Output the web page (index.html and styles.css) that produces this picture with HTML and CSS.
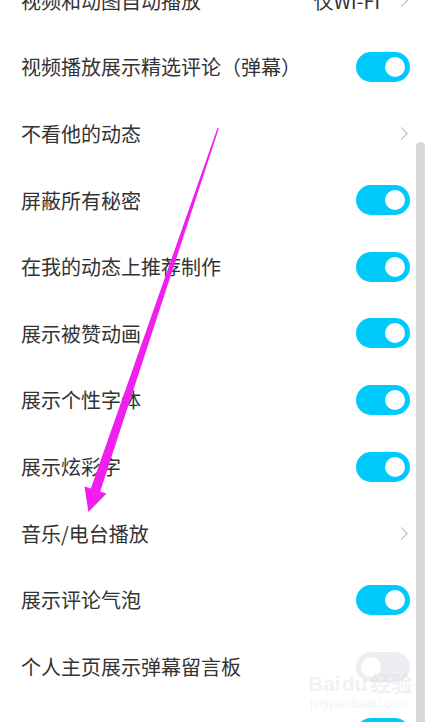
FILE: index.html
```html
<!DOCTYPE html>
<html lang="zh-CN">
<head>
  <meta charset="UTF-8" />
  <title>设置</title>
  <meta name="viewport" content="width=device-width, initial-scale=1.0" />
  <link rel="stylesheet" href="styles.css">
</head>
<body>
  <div class="screen">
    <ul class="list">
      <li class="row">
        <span class="label">视频和动图自动播放</span>
        <span class="value">仅Wi-Fi</span>
        <span class="chevron"></span>
      </li>
      <li class="row">
        <span class="label">视频播放展示精选评论（弹幕）</span>
        <span class="toggle on"></span>
      </li>
      <li class="row">
        <span class="label">不看他的动态</span>
        <span class="chevron"></span>
      </li>
      <li class="row">
        <span class="label">屏蔽所有秘密</span>
        <span class="toggle on"></span>
      </li>
      <li class="row">
        <span class="label">在我的动态上推荐制作</span>
        <span class="toggle on"></span>
      </li>
      <li class="row">
        <span class="label">展示被赞动画</span>
        <span class="toggle on"></span>
      </li>
      <li class="row">
        <span class="label">展示个性字体</span>
        <span class="toggle on"></span>
      </li>
      <li class="row">
        <span class="label">展示炫彩字</span>
        <span class="toggle on"></span>
      </li>
      <li class="row">
        <span class="label">音乐/电台播放</span>
        <span class="chevron"></span>
      </li>
      <li class="row">
        <span class="label">展示评论气泡</span>
        <span class="toggle on"></span>
      </li>
      <li class="row">
        <span class="label">个人主页展示弹幕留言板</span>
        <span class="toggle"></span>
      </li>
      <li class="row">
        <span class="label"></span>
        <span class="toggle on"></span>
      </li>
    </ul>
    <div class="track">
      <div class="thumb"></div>
    </div>

    <!-- annotation arrow drawn over the screenshot -->
    <svg class="arrow" width="428" height="722" viewBox="0 0 428 722">
      <polygon points="217.5,128 218.8,128.4 100.2,491.6 106.5,493.5 88.4,512 84.5,486.5 90.8,488.4" fill="#f01ff0" />
    </svg>

    <div class="watermark">
      <div class="wm-logo">Bai<span class="wm-du">du</span>经验</div>
      <div class="wm-url">jingyan.baidu.com</div>
    </div>
  </div>
</body>
</html>
```

FILE: styles.css
```css
body {
  margin: 0;
  background: #fff;
  font-family: "Noto Sans CJK SC", "Noto Sans", sans-serif;
  overflow: hidden;
}

.screen {
  position: relative;
  display: flex;
  width: 428px;
  height: 722px;
  overflow: hidden;
  background: #fff;
}

.list {
  flex: 1;
  list-style: none;
  margin: -33.3px 0 0;
  padding: 0;
}

.row {
  display: flex;
  align-items: center;
  height: 66.667px;
  padding: 0 6px 0 21px;
  box-sizing: border-box;
}

.label {
  flex: 1;
  font-size: 20px;
  color: #333;
  white-space: nowrap;
}

.value {
  font-size: 20px;
  color: #333;
  margin-right: 17px;
}

.chevron {
  width: 8px;
  height: 8px;
  margin-right: 4px;
  border-top: 1.6px solid #aeb7c1;
  border-right: 1.6px solid #aeb7c1;
  transform: rotate(45deg);
}

.toggle {
  position: relative;
  width: 54px;
  height: 30px;
  border-radius: 15px;
  background: #eceef3;
}

.toggle::after {
  content: "";
  position: absolute;
  top: 5px;
  left: 5px;
  width: 20px;
  height: 20px;
  border-radius: 50%;
  background: #fff;
}

.toggle.on {
  background: #00c9fb;
}

.toggle.on::after {
  left: 29px;
}

.track {
  width: 12px;
  display: flex;
  flex-direction: column;
}

.thumb {
  flex: 1;
  margin: 142px 3px 0 0;
  border-radius: 5px 5px 0 0;
  background: #d8d8d8;
}

.arrow {
  position: absolute;
  top: 0;
  left: 0;
  pointer-events: none;
}

.watermark {
  position: absolute;
  left: 308px;
  top: 672px;
  color: rgba(215, 215, 215, 0.35);
  font-family: "Liberation Sans", "Noto Sans CJK SC", sans-serif;
  pointer-events: none;
}

.wm-logo {
  font-size: 21px;
  font-weight: bold;
  line-height: 24px;
}

.wm-du {
  margin: 0 3px 0 1px;
}

.wm-url {
  font-size: 12px;
  line-height: 16px;
  padding-left: 2px;
}
```
